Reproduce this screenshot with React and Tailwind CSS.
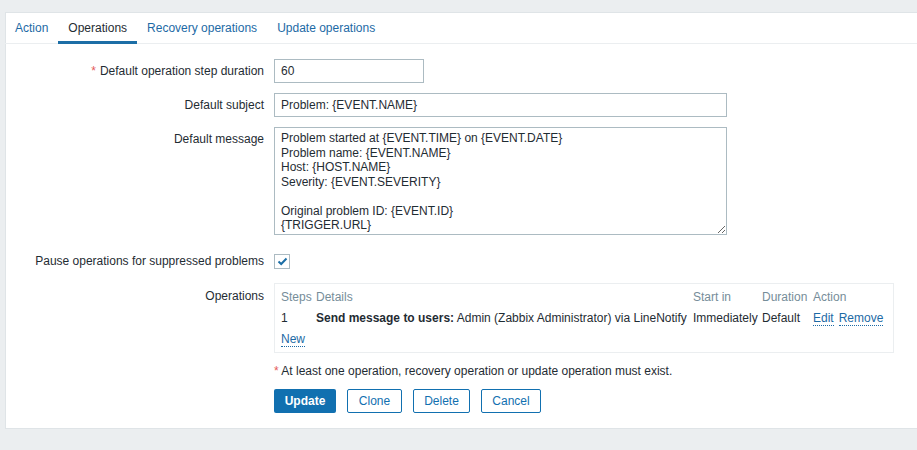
import React from "react";

const Row = ({ label, required, children, labelClass = "pt-[5px]" }) => (
  <div className="flex">
    <div className={`w-[268px] shrink-0 pr-[10px] text-right leading-[14px] ${labelClass}`}>
      {required && <span className="text-[#e45959] mr-[4px]">*</span>}
      {label}
    </div>
    <div className="flex-1">{children}</div>
  </div>
);

const DottedLink = ({ children, className = "" }) => (
  <span className={`text-[#1d6aa5] border-b border-dotted border-[#1d6aa5] leading-[13px] inline-block ${className}`}>
    {children}
  </span>
);

export default function App() {
  const msg =
    "Problem started at {EVENT.TIME} on {EVENT.DATE}\nProblem name: {EVENT.NAME}\nHost: {HOST.NAME}\nSeverity: {EVENT.SEVERITY}\n\nOriginal problem ID: {EVENT.ID}\n{TRIGGER.URL}";
  return (
    <div className="min-h-[450px] bg-[#ebeef0] pt-[12px] font-['Liberation_Sans',Arial,sans-serif] text-[12px] text-[#1f2c33]">
      <div className="ml-[5px] bg-white border-t border-l border-b border-[#dfe4e7]">
        {/* Tabs */}
        <div className="flex h-[31px] border-b border-[#ebeef0] -ml-[1px]">
          <div className="px-[10px] flex items-center text-[#1d6aa5]">Action</div>
          <div className="px-[10px] flex items-center border-b-[3px] border-[#1c6ea6] pt-[2px] mb-[-1px]">Operations</div>
          <div className="px-[10px] flex items-center text-[#1d6aa5]">Recovery operations</div>
          <div className="px-[10px] flex items-center text-[#1d6aa5]">Update operations</div>
        </div>

        {/* Form */}
        <div className="pt-[15px] pb-[15px] flex flex-col">
          <Row label="Default operation step duration" required>
            <div className="w-[150px] h-[24px] border border-[#acbbc2] px-[6px] flex items-center">60</div>
          </Row>
          <div className="h-[10px]" />
          <Row label="Default subject">
            <div className="w-[453px] h-[24px] border border-[#acbbc2] px-[6px] flex items-center">Problem: {"{EVENT.NAME}"}</div>
          </Row>
          <div className="h-[10px]" />
          <Row label="Default message">
            <textarea
              readOnly
              value={msg}
              className="block w-[453px] h-[108px] border border-[#acbbc2] px-[6px] pt-[3px] leading-[14.5px] text-[12px] text-[#1f2c33] resize-y outline-none font-['Liberation_Sans',Arial,sans-serif]"
            />
          </Row>
          <div className="h-[14px]" />
          <Row label="Pause operations for suppressed problems" labelClass="pt-[5px]">
            <div className="h-[24px] flex items-center pt-[1px]">
              <div className="w-[16px] h-[15px] border border-[#acbbc2] flex items-center justify-center">
                <svg width="11" height="9" viewBox="0 0 11 9">
                  <path d="M1.5 4.5 L4.2 7 L9.5 1.5" fill="none" stroke="#1c6ea6" strokeWidth="2" />
                </svg>
              </div>
            </div>
          </Row>
          <div className="h-[10px]" />
          <Row label="Operations" labelClass="pt-[6px]">
            <div className="w-[620px] h-[70px] border border-[#ebeef0] pl-[6px] pt-[3px]">
              <div className="grid grid-cols-[35px_377px_69px_51px_auto] leading-[21px]">
                <div className="text-[#768d99]">Steps</div>
                <div className="text-[#768d99]">Details</div>
                <div className="text-[#768d99]">Start in</div>
                <div className="text-[#768d99]">Duration</div>
                <div className="text-[#768d99]">Action</div>

                <div>1</div>
                <div className="whitespace-nowrap">
                  <span className="font-bold">Send message to users:</span> Admin (Zabbix Administrator) via LineNotify
                </div>
                <div>Immediately</div>
                <div>Default</div>
                <div className="flex gap-[5px] items-center">
                  <DottedLink>Edit</DottedLink>
                  <DottedLink>Remove</DottedLink>
                </div>

                <div className="col-span-5 flex items-center h-[21px]">
                  <DottedLink>New</DottedLink>
                </div>
              </div>
            </div>
          </Row>
          <div className="h-[11px]" />
          <Row label="" labelClass="">
            <div className="leading-[14px]">
              <span className="text-[#e45959]">*</span> At least one operation, recovery operation or update operation must exist.
            </div>
          </Row>
          <div className="h-[11px]" />
          <Row label="" labelClass="">
            <div className="flex gap-[11px]">
              <div className="w-[62px] h-[24px] bg-[#1170b0] text-white font-bold flex items-center justify-center rounded-[2px]">Update</div>
              <div className="w-[55px] h-[24px] border border-[#1170b0] text-[#1170b0] flex items-center justify-center rounded-[2px]">Clone</div>
              <div className="w-[57px] h-[24px] border border-[#1170b0] text-[#1170b0] flex items-center justify-center rounded-[2px]">Delete</div>
              <div className="w-[60px] h-[24px] border border-[#1170b0] text-[#1170b0] flex items-center justify-center rounded-[2px]">Cancel</div>
            </div>
          </Row>
        </div>
      </div>
    </div>
  );
}
